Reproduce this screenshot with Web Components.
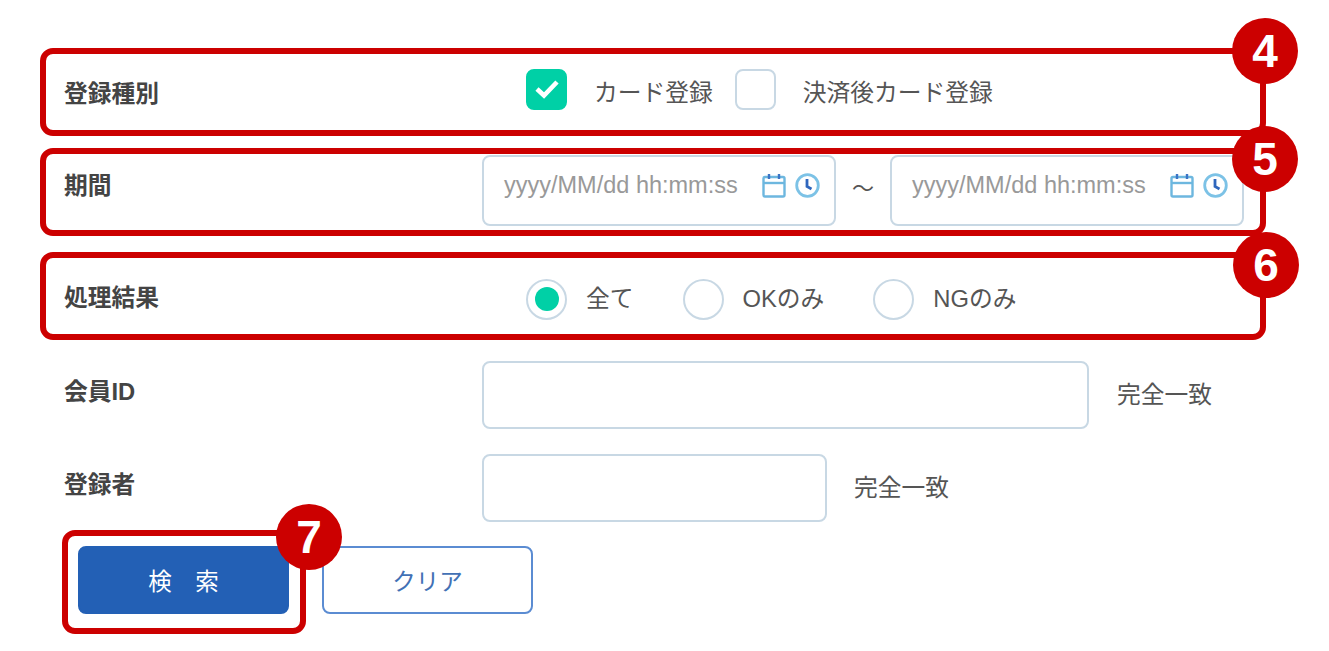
<!DOCTYPE html>
<html lang="ja"><head><meta charset="utf-8"><title>検索</title>
<style>
html,body{margin:0;background:#fff}
body{font-family:"Liberation Sans","Noto Sans CJK JP",sans-serif;color:#4a4a4a;width:1329px;height:651px;overflow:hidden}
main{display:block;padding:48px 0 0 40px;box-sizing:border-box}
#r2{margin-top:12px}#r3{margin-top:16px}#r4{margin-top:21px}#r5{margin-top:25px}
x-actions{margin-top:8px}
</style></head><body>
<main>
<x-row id="r1" boxed label="登録種別" h="88" lift="0">
  <x-choice kind="check" checked gap="27" after="22">カード登録</x-choice>
  <x-choice kind="check" gap="27">決済後カード登録</x-choice>
  <x-badge n="4" slot="badge" style="top:-36px"></x-badge>
</x-row>
<x-row id="r2" boxed label="期間" h="88" top>
  <x-date></x-date><span style="font-size:22px;width:54px;text-align:center;color:#555;padding-top:15px;box-sizing:border-box">～</span><x-date></x-date>
  <x-badge n="5" slot="badge" style="top:-28px"></x-badge>
</x-row>
<x-row id="r3" boxed label="処理結果" h="88">
  <x-choice kind="radio" checked gap="19" after="49">全て</x-choice>
  <x-choice kind="radio" gap="19" after="49">OKのみ</x-choice>
  <x-choice kind="radio" gap="19">NGのみ</x-choice>
  <x-badge n="6" slot="badge" style="top:-26px;left:1187px"></x-badge>
</x-row>
<x-row id="r4" label="会員ID" h="68" flush><x-field w="607" gap="28" note="完全一致"></x-field></x-row>
<x-row id="r5" label="登録者" h="68" flush><x-field w="345" gap="27" note="完全一致"></x-field></x-row>
<x-actions>
  <x-btn primary>検　索</x-btn><x-btn>クリア</x-btn>
  <x-badge n="7" slot="badge" style="top:-32px;left:208px"></x-badge>
</x-actions>
</main>
<script>
const FONT='"Liberation Sans","Noto Sans CJK JP",sans-serif';
class Base extends HTMLElement{
  render(html){if(!this.shadowRoot)this.attachShadow({mode:'open'});this.shadowRoot.innerHTML=html;}
}
customElements.define('x-row',class extends Base{connectedCallback(){
  const h=this.getAttribute('h'),flush=this.hasAttribute('flush'),top=this.hasAttribute('top');
  this.render(`<style>
  :host{display:block;position:relative;width:1226px;box-sizing:border-box;height:${h}px;border:6px solid transparent;border-radius:13px}
  :host([flush]){border-width:0 6px;}
  :host([boxed]){border-color:#cc0000}
  .wrap{display:grid;grid-template-columns:418px 1fr;height:100%;padding-left:18px;box-sizing:border-box;align-items:center}
  .label{font:bold 23.75px ${FONT};color:#444;padding-bottom:${flush?'12px':top?'18px':'2px'}}
  .ctl{display:flex;align-items:${top?'flex-start':'center'};padding-left:${top||flush?0:44}px;height:100%;padding-top:${top?1:0}px;box-sizing:border-box}
  </style><div class="wrap"><div class="label">${this.getAttribute('label')}</div><div class="ctl"><slot></slot></div></div><slot name="badge"></slot>`);
}});
customElements.define('x-choice',class extends Base{connectedCallback(){
  const radio=this.getAttribute('kind')==='radio',on=this.hasAttribute('checked');
  const mark=on?(radio?'<span class="dot"></span>':'<svg width="26" height="22" viewBox="0 0 26 22"><path d="M3 11l7 6.5L23 4" fill="none" stroke="#fff" stroke-width="4.6"/></svg>'):'';
  this.render(`<style>
  :host{display:inline-flex;align-items:center;gap:${this.getAttribute('gap')}px;margin-right:${this.getAttribute('after')||0}px;font:23.75px ${FONT};color:#555}
  .box{width:41px;height:41px;box-sizing:border-box;border:2px solid #c8d8e4;border-radius:${radio?'50%':'8px'};display:flex;align-items:center;justify-content:center;flex:none;background:#fff;${radio?'margin-top:6px':'margin-bottom:6px'}}
  .box.fill{background:#00d0a6;border-color:#00d0a6}
  .dot{width:24px;height:24px;border-radius:50%;background:#00d0a6}
  .txt{${radio?'padding-top:0':'padding-bottom:4px'}}
  </style><span class="box ${on&&!radio?'fill':''}">${mark}</span><span class="txt"><slot></slot></span>`);
}});
customElements.define('x-date',class extends Base{connectedCallback(){
  this.render(`<style>
  :host{display:flex;width:354px;height:71px;box-sizing:border-box;border:2px solid #c8d8e4;border-radius:8px;padding:15px 14px 0 20px;background:#fff;font:23.5px ${FONT};color:#999}
  .ph{flex:1;white-space:nowrap;line-height:26px}
  .icons{display:flex;gap:9px;align-items:flex-start;padding-top:1px}
  svg{display:block}
  </style><span class="ph">yyyy/MM/dd hh:mm:ss</span><span class="icons">
  <svg width="24" height="25" viewBox="0 0 24 25"><rect x="1.5" y="4" width="21" height="19.5" rx="1.5" fill="none" stroke="#6db7df" stroke-width="2.4"/><path d="M1.5 10h21" stroke="#6db7df" stroke-width="2.4"/><path d="M7 1v5M17 1v5" stroke="#3b74c6" stroke-width="2.4"/></svg>
  <svg width="25" height="25" viewBox="0 0 25 25"><circle cx="12.5" cy="12.5" r="10.8" fill="none" stroke="#7cc2e6" stroke-width="2.8"/><path d="M12 6v7.5l4.5 2.5" fill="none" stroke="#2f66bd" stroke-width="2.8"/></svg></span>`);
}});
customElements.define('x-field',class extends Base{connectedCallback(){
  this.render(`<style>
  :host{display:flex;align-items:center;gap:${this.getAttribute('gap')}px;font:23.75px ${FONT};color:#555}
  .in{width:${this.getAttribute('w')}px;height:68px;box-sizing:border-box;border:2px solid #c8d8e4;border-radius:8px;background:#fff}
  .note{padding-bottom:6px}
  </style><span class="in"></span><span class="note">${this.getAttribute('note')}</span>`);
}});
customElements.define('x-actions',class extends Base{connectedCallback(){
  this.render(`<style>
  :host{display:flex;align-items:center;position:relative;margin-left:22px;width:244px;height:104px;box-sizing:border-box;border:6px solid #cc0000;border-radius:13px;padding:0 0 4px 10px;gap:33px;white-space:nowrap}
  </style><slot></slot><slot name="badge"></slot>`);
}});
customElements.define('x-btn',class extends Base{connectedCallback(){
  this.render(`<style>
  :host{display:flex;flex:none;width:211px;height:68px;box-sizing:border-box;align-items:center;justify-content:center;border:2px solid #5b8cd2;border-radius:8px;font:23.5px ${FONT};color:#4271b5;background:#fff}
  :host([primary]){background:#2360b5;border-color:#2360b5;color:#fff}
  </style><slot></slot>`);
}});
customElements.define('x-badge',class extends Base{connectedCallback(){
  this.render(`<style>
  :host{position:absolute;left:1186px;width:66px;height:66px;border-radius:50%;background:#cc0000;color:#fff;font:bold 46px ${FONT};display:flex;align-items:center;justify-content:center;z-index:2}
  </style>${this.getAttribute('n')}`);
}});
</script>
</body></html>
